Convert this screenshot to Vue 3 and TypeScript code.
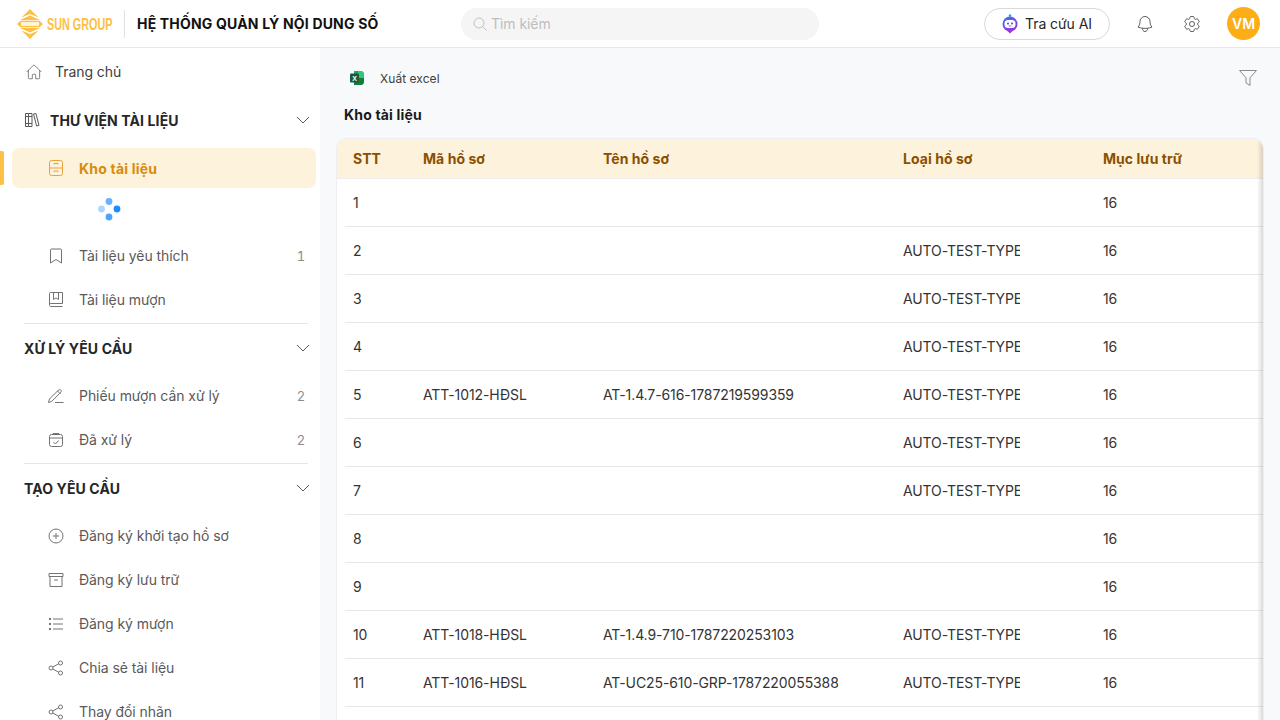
<template>
  <div class="app">
    <header class="topbar">
      <div class="brand">
        <svg class="logo" viewBox="0 0 26 30" width="26" height="30">
          <path d="M13 0 21.500 8.500 13 5 4.500 8.500Z" fill="#fdc045" />
          <path d="M13 30 4.500 21.500 13 25l8.500-3.500Z" fill="#fdc045" />
          <path d="M13 6.500 23 11H3ZM3 19h20l-10 4.500Z" fill="#fdc045" />
          <path d="M0 15 3.500 11.800h19L26 15l-3.500 3.200h-19Z" fill="#fdc045" />
          <rect x="4" y="13" width="18" height="4" fill="#fff3d6" />
        </svg>
        <span class="logo-text">SUN GROUP</span>
      </div>
      <span class="brand-sep"></span>
      <span class="app-title">HỆ THỐNG QUẢN LÝ NỘI DUNG SỐ</span>
      <div class="search">
        <svg width="16" height="16" viewBox="0 0 24 24" class="line search-icon">
          <circle cx="10.500" cy="10.500" r="7.500" />
          <path d="m16 16 6 6" />
        </svg>
        <span>Tìm kiếm</span>
      </div>
      <button class="ai-btn" type="button">
        <svg width="18" height="20" viewBox="0 0 18 20">
          <defs>
            <linearGradient id="aiGrad" x1="0" y1="0" x2="0.600" y2="1">
              <stop offset="0" stop-color="#2f7bf5" />
              <stop offset="1" stop-color="#a02fe0" />
            </linearGradient>
          </defs>
          <circle cx="9" cy="1.500" r="1.300" fill="#3b9cf5" />
          <rect x="8.500" y="2" width="1" height="2" fill="#3b9cf5" />
          <circle cx="9" cy="10" r="7.500" fill="url(#aiGrad)" />
          <path d="M6.500 17h5L9 19.500Z" fill="#a02fe0" />
          <rect x="3.500" y="6" width="11" height="8" rx="3.500" fill="#fff" />
          <circle cx="7" cy="9.500" r="1" fill="#4a4ae0" />
          <circle cx="11" cy="9.500" r="1" fill="#4a4ae0" />
          <path d="M7.500 12h3" stroke="#4a4ae0" stroke-width="0.700" />
        </svg>
        <span>Tra cứu AI</span>
      </button>
      <svg class="line top-icon bell" width="20" height="20" viewBox="0 0 24 24">
        <path d="M14.857 17.082a23.848 23.848 0 0 0 5.454-1.31A8.967 8.967 0 0 1 18 9.750V9A6 6 0 0 0 6 9v.75a8.967 8.967 0 0 1-2.312 6.022c1.733.64 3.560 1.085 5.455 1.310m5.714 0a24.255 24.255 0 0 1-5.714 0m5.714 0a3 3 0 1 1-5.714 0" />
      </svg>
      <svg class="line top-icon gear" width="20" height="20" viewBox="0 0 24 24">
        <path d="M9.594 3.940c.09-.542.56-.94 1.110-.94h2.593c.55 0 1.020.398 1.110.94l.213 1.281c.063.374.313.686.645.87.074.04.147.083.22.127.325.196.72.257 1.075.124l1.217-.456a1.125 1.125 0 0 1 1.370.49l1.296 2.247a1.125 1.125 0 0 1-.26 1.431l-1.003.827c-.293.241-.438.613-.43.992a7.723 7.723 0 0 1 0 .255c-.008.378.137.75.43.991l1.004.827c.424.35.534.955.26 1.430l-1.298 2.247a1.125 1.125 0 0 1-1.369.491l-1.217-.456c-.355-.133-.75-.072-1.076.124a6.470 6.470 0 0 1-.22.128c-.331.183-.581.495-.644.869l-.213 1.281c-.09.543-.56.94-1.110.94h-2.594c-.55 0-1.019-.398-1.110-.94l-.213-1.281c-.062-.374-.312-.686-.644-.87a6.520 6.520 0 0 1-.22-.127c-.325-.196-.72-.257-1.076-.124l-1.217.456a1.125 1.125 0 0 1-1.369-.49l-1.297-2.247a1.125 1.125 0 0 1 .26-1.431l1.004-.827c.292-.24.437-.613.43-.991a6.932 6.932 0 0 1 0-.255c.007-.38-.138-.751-.43-.992l-1.004-.827a1.125 1.125 0 0 1-.26-1.430l1.297-2.247a1.125 1.125 0 0 1 1.370-.491l1.216.456c.356.133.751.072 1.076-.124.072-.044.146-.086.22-.128.332-.183.582-.495.644-.869l.214-1.280Z" />
        <circle cx="12" cy="12" r="3" />
      </svg>
      <div class="avatar">VM</div>
    </header>

    <div class="body">
      <aside class="sidebar">
        <a class="home-row">
          <svg class="line" width="18" height="18" viewBox="0 0 24 24">
            <path d="m2.250 12 8.954-8.955c.44-.439 1.152-.439 1.591 0L21.750 12M4.500 9.750v10.125c0 .621.504 1.125 1.125 1.125H9.750v-4.875c0-.621.504-1.125 1.125-1.125h2.250c.621 0 1.125.504 1.125 1.125V21h4.125c.621 0 1.125-.504 1.125-1.125V9.750" />
          </svg>
          <span>Trang chủ</span>
        </a>

        <section v-for="(group, g) in menu" :key="group.title" class="group">
          <div class="group-head">
            <svg v-if="g === 0" class="line group-icon" width="16" height="16" viewBox="0 0 16 16">
              <path d="M1.500 1.500h3v13h-3ZM4.500 1.500h3.500v13H4.500ZM1.500 4.500h6.500M1.500 11.500h6.500M9.500 2l2.400-.6 3.100 12-2.400.6Z" />
            </svg>
            <span class="group-title">{{ group.title }}</span>
            <svg class="line chevron" width="14" height="14" viewBox="0 0 14 14">
              <path d="m1 4 6 6 6-6" />
            </svg>
          </div>
          <ul class="items">
            <template v-for="item in group.items" :key="item.label">
              <li class="item" :class="{ active: item.active }">
                <svg class="line item-icon" width="16" height="16" viewBox="0 0 16 16" v-html="icons[item.icon]"></svg>
                <span class="item-label">{{ item.label }}</span>
                <span v-if="item.count" class="item-count">{{ item.count }}</span>
              </li>
              <li v-if="item.active" class="spin-row">
                <svg width="24" height="24" viewBox="0 0 24 24">
                  <circle cx="12" cy="4.500" r="3.400" fill="#69b1ff" />
                  <circle cx="20" cy="12" r="3.400" fill="#1f8bff" />
                  <circle cx="12" cy="20" r="3.400" fill="#4da3ff" />
                  <circle cx="4.500" cy="12" r="3.400" fill="#aed5ff" />
                </svg>
              </li>
            </template>
          </ul>
          <div v-if="g < menu.length - 1" class="rule"></div>
        </section>
      </aside>

      <main class="content">
        <div class="toolbar">
          <button class="export" type="button">
            <svg width="16" height="16" viewBox="0 0 16 16">
              <path d="M5 1h6.500C13.500 1 15 2.500 15 4.500v7c0 2-1.500 3.500-3.500 3.500H5Z" fill="#21a366" />
              <path d="M9 1h2.500C13.500 1 15 2.500 15 4.500V8H9Z" fill="#33c481" />
              <path d="M5 8h10v3.500c0 2-1.500 3.500-3.500 3.500H5Z" fill="#107c41" />
              <rect x="1" y="3.500" width="9" height="9" rx="1" fill="#185c37" />
              <text x="5.500" y="10.500" class="xl">X</text>
            </svg>
            <span class="export-label">Xuất excel</span>
          </button>
          <svg class="line filter" width="20" height="20" viewBox="0 0 20 20">
            <path d="M1.500 2.500h17l-6.500 7.300v7.700l-4-2.500v-5.200Z" />
          </svg>
        </div>
        <h1 class="page-title">Kho tài liệu</h1>

        <div class="table-wrap">
          <table>
            <colgroup>
              <col style="width: 70px" />
              <col style="width: 180px" />
              <col style="width: 300px" />
              <col style="width: 200px" />
              <col />
            </colgroup>
            <thead>
              <tr>
                <th>STT</th>
                <th>Mã hồ sơ</th>
                <th>Tên hồ sơ</th>
                <th>Loại hồ sơ</th>
                <th>Mục lưu trữ</th>
              </tr>
            </thead>
            <tbody>
              <tr v-for="row in rows" :key="row.stt">
                <td>{{ row.stt }}</td>
                <td>{{ row.code }}</td>
                <td>{{ row.name }}</td>
                <td><div class="clip">{{ row.type }}</div></td>
                <td>{{ row.shelf }}</td>
              </tr>
            </tbody>
          </table>
        </div>
      </main>
    </div>
  </div>
</template>

<script setup lang="ts">
interface MenuItem {
  label: string
  icon: string
  count?: number
  active?: boolean
}

interface DocRow {
  stt: number | string
  code: string
  name: string
  type: string
  shelf: string
}

const icons: Record<string, string> = {
  cabinet:
    '<rect x="1.500" y="0.500" width="13" height="15" rx="2"/><path d="M1.500 8h13M6 4.500V3.500h4v1M6 12v-1h4v1"/>',
  bookmark: '<path d="M2.500 2c0-.6.400-1 1-1h9c.6 0 1 .4 1 1v13L8 11.500 2.500 15Z"/>',
  book: '<path d="M1.500 12.500v-11c0-.6.400-1 1-1h12v11H3c-1 0-1.500.5-1.500 1.500S2 14.500 3 14.500h11.500M5.500.5v7L8 6l2.500 1.500V.5"/>',
  pen: '<path d="M.5 14.500 1.500 11l9-9c.7-.7 1.700-.7 2.300 0s.7 1.600 0 2.300l-9 9ZM9.500 3l3 3M7 14.500h8.500"/>',
  done: '<rect x="1.500" y="2.500" width="13" height="12" rx="2"/><path d="M5 2.500V1.500h6v1M1.500 6h13M5.500 10l2 2 3-3.500"/>',
  plus: '<circle cx="8" cy="8" r="7"/><path d="M8 4.800v6.400M4.800 8h6.400"/>',
  archive: '<path d="M1 1.500h14v3H1ZM2 4.500v10h12v-10M6 8h4"/>',
  list: '<path d="M5 3h10M5 8h10M5 13h10"/><path d="M1 3h2M1 8h2M1 13h2" stroke-width="2"/>',
  share: '<circle cx="3" cy="8" r="2"/><circle cx="12.500" cy="3" r="2"/><circle cx="12.500" cy="13" r="2"/><path d="m4.800 7 5.900-3.200M4.800 9l5.900 3.200"/>',
}

const menu: { title: string; items: MenuItem[] }[] = [
  {
    title: 'THƯ VIỆN TÀI LIỆU',
    items: [
      { label: 'Kho tài liệu', icon: 'cabinet', active: true },
      { label: 'Tài liệu yêu thích', icon: 'bookmark', count: 1 },
      { label: 'Tài liệu mượn', icon: 'book' },
    ],
  },
  {
    title: 'XỬ LÝ YÊU CẦU',
    items: [
      { label: 'Phiếu mượn cần xử lý', icon: 'pen', count: 2 },
      { label: 'Đã xử lý', icon: 'done', count: 2 },
    ],
  },
  {
    title: 'TẠO YÊU CẦU',
    items: [
      { label: 'Đăng ký khởi tạo hồ sơ', icon: 'plus' },
      { label: 'Đăng ký lưu trữ', icon: 'archive' },
      { label: 'Đăng ký mượn', icon: 'list' },
      { label: 'Chia sẻ tài liệu', icon: 'share' },
      { label: 'Thay đổi nhãn', icon: 'share' },
    ],
  },
]

const T = 'AUTO-TEST-TYPE'
const rows: DocRow[] = [
  { stt: 1, code: '', name: '', type: '', shelf: '16' },
  { stt: 2, code: '', name: '', type: T, shelf: '16' },
  { stt: 3, code: '', name: '', type: T, shelf: '16' },
  { stt: 4, code: '', name: '', type: T, shelf: '16' },
  { stt: 5, code: 'ATT-1012-HĐSL', name: 'AT-1.4.7-616-1787219599359', type: T, shelf: '16' },
  { stt: 6, code: '', name: '', type: T, shelf: '16' },
  { stt: 7, code: '', name: '', type: T, shelf: '16' },
  { stt: 8, code: '', name: '', type: '', shelf: '16' },
  { stt: 9, code: '', name: '', type: '', shelf: '16' },
  { stt: 10, code: 'ATT-1018-HĐSL', name: 'AT-1.4.9-710-1787220253103', type: T, shelf: '16' },
  { stt: 11, code: 'ATT-1016-HĐSL', name: 'AT-UC25-610-GRP-1787220055388', type: T, shelf: '16' },
  { stt: '', code: '', name: '', type: '', shelf: '' },
]
</script>

<style>
html,
body {
  margin: 0;
  height: 100%;
  overflow: hidden;
}
</style>

<style scoped>
.app {
  height: 720px;
  display: flex;
  flex-direction: column;
  overflow: hidden;
  font-family: Inter, "Noto Sans", sans-serif;
  font-size: 14px;
  line-height: 22px;
  letter-spacing: -0.06px;
  color: #262626;
  background: #fff;
}

.line {
  fill: none;
  stroke: currentColor;
  stroke-width: 1;
  flex: none;
}

/* top bar */
.topbar {
  height: 47px;
  flex: none;
  display: flex;
  align-items: center;
  border-bottom: 1px solid #e8e8e8;
  padding-left: 17px;
  background: #fff;
}

.brand {
  width: 95px;
  flex: none;
  display: flex;
  align-items: center;
  gap: 4px;
}

.logo {
  flex: none;
}

.logo-text {
  font-family: "Liberation Sans", sans-serif;
  font-size: 16.500px;
  font-weight: 700;
  letter-spacing: 0;
  color: #fdc045;
  white-space: nowrap;
  transform: scaleX(0.655);
  transform-origin: left center;
}

.brand-sep {
  width: 1px;
  height: 28px;
  margin: 0 12px;
  background: #e0e0e0;
}

.app-title {
  width: 324px;
  font-weight: 700;
  letter-spacing: 0.18px;
  color: #111;
  white-space: nowrap;
}

.search {
  width: 358px;
  height: 32px;
  border-radius: 16px;
  background: #f5f5f5;
  display: flex;
  align-items: center;
  gap: 3px;
  padding-left: 11px;
  box-sizing: border-box;
  color: #bdbdbd;
}

.search-icon {
  color: #a6a6a6;
}

.ai-btn {
  margin-left: 165px;
  width: 126px;
  height: 32px;
  border: 1px solid #d9d9d9;
  border-radius: 16px;
  background: #fff;
  display: flex;
  align-items: center;
  justify-content: center;
  gap: 6px;
  padding: 0 1px 0 0;
  font: inherit;
  letter-spacing: inherit;
  color: #262626;
}

.top-icon {
  color: #404040;
}

.bell {
  margin-left: 25px;
}

.gear {
  margin-left: 27px;
}

.avatar {
  width: 33px;
  height: 33px;
  margin-left: 25px;
  border-radius: 50%;
  background: #fdad15;
  color: #fff;
  font-weight: 600;
  display: flex;
  align-items: center;
  justify-content: center;
}

.body {
  flex: 1;
  display: flex;
  min-height: 0;
}

/* sidebar */
.sidebar {
  width: 320px;
  flex: none;
  background: #fff;
  padding-top: 2px;
  overflow: hidden;
}

.home-row {
  height: 44px;
  display: flex;
  align-items: center;
  gap: 12px;
  padding-left: 25px;
  margin-bottom: 2px;
  color: #404040;
}

.home-row .line {
  color: #595959;
}

.group-head {
  height: 48px;
  display: flex;
  align-items: center;
  padding: 0 10px 0 24px;
  font-weight: 700;
  letter-spacing: 0.12px;
  color: #262626;
}

.group-title {
  padding-top: 1px;
}

.group-icon {
  margin-right: 10px;
  color: #595959;
}

.chevron {
  margin-left: auto;
  color: #595959;
}

.items {
  list-style: none;
  margin: 0;
  padding: 2px 0 1px;
}

.item {
  position: relative;
  height: 44px;
  display: flex;
  align-items: center;
  margin: 0 4px 0 12px;
  padding-left: 36px;
  color: #595959;
}

.item-icon {
  margin-right: 15px;
  color: #737373;
}

.item-count {
  margin-left: auto;
  margin-right: 11px;
  font-size: 13px;
  font-variant-numeric: tabular-nums;
  color: #8c8c8c;
}

.item.active {
  height: 40px;
  margin: 2px 4px 2px 12px;
  border-radius: 8px;
  background: #fdf2dc;
  color: #d98a0b;
  font-weight: 700;
  letter-spacing: 0.2px;
}

.item.active .item-label {
  padding-top: 1px;
}

.item.active .item-icon {
  color: #e8a33d;
}

.item.active::before {
  content: "";
  position: absolute;
  left: -12px;
  top: 3px;
  bottom: 3px;
  width: 4px;
  border-radius: 0 2px 2px 0;
  background: #fdc045;
}

.spin-row {
  height: 44px;
  padding: 7px 0 0 97px;
  box-sizing: border-box;
}

.spin-row svg {
  display: block;
}

.rule {
  height: 1px;
  margin: 0 12px 0 24px;
  background: #e5e5e5;
}

/* content */
.content {
  flex: 1;
  min-width: 0;
  background: #f8f9fb;
  padding: 0 17px;
  overflow: hidden;
}

.toolbar {
  height: 60px;
  display: flex;
  align-items: center;
  justify-content: space-between;
  padding: 0 5px 0 12px;
  box-sizing: border-box;
}

.export {
  display: flex;
  align-items: center;
  gap: 15px;
  border: 0;
  background: none;
  padding: 0;
  font: inherit;
  font-size: 12px;
  letter-spacing: 0.05px;
  color: #404040;
}

.export-label {
  padding-top: 1px;
}

.xl {
  font-family: "Liberation Sans", sans-serif;
  font-size: 7px;
  font-weight: 700;
  fill: #fff;
  text-anchor: middle;
}

.filter {
  color: #8c8c8c;
}

.page-title {
  margin: 0;
  height: 31px;
  padding-left: 7px;
  font-size: 14px;
  line-height: 14px;
  font-weight: 700;
  letter-spacing: 0.18px;
  color: #1a1a1a;
}

.table-wrap {
  position: relative;
  border-radius: 10px 10px 0 0;
  overflow: hidden;
  background: #fff;
  box-shadow: 0 0 0 1px #eceef2;
}

.table-wrap::after {
  content: "";
  position: absolute;
  top: 0;
  right: 0;
  bottom: 0;
  width: 6px;
  background: linear-gradient(to left, rgba(0, 0, 0, 0.14), rgba(0, 0, 0, 0));
}

table {
  width: 100%;
  table-layout: fixed;
  border-collapse: separate;
  border-spacing: 0;
}

th {
  height: 40px;
  padding: 0 16px;
  box-sizing: border-box;
  background: #fdf2dc;
  border-bottom: 1px solid #eeeeee;
  text-align: left;
  font-weight: 700;
  letter-spacing: 0.05px;
  color: #8a5000;
}

td {
  height: 48px;
  padding: 1px 16px 0;
  box-sizing: border-box;
  border-bottom: 1px solid #e8e8e8;
  white-space: nowrap;
  letter-spacing: -0.1px;
  color: #333;
}

td:first-child {
  border-bottom-color: transparent;
  background: linear-gradient(#e8e8e8, #e8e8e8) right bottom / calc(100% - 8px) 1px no-repeat border-box;
}

.clip {
  width: 117px;
  overflow: hidden;
}
</style>
